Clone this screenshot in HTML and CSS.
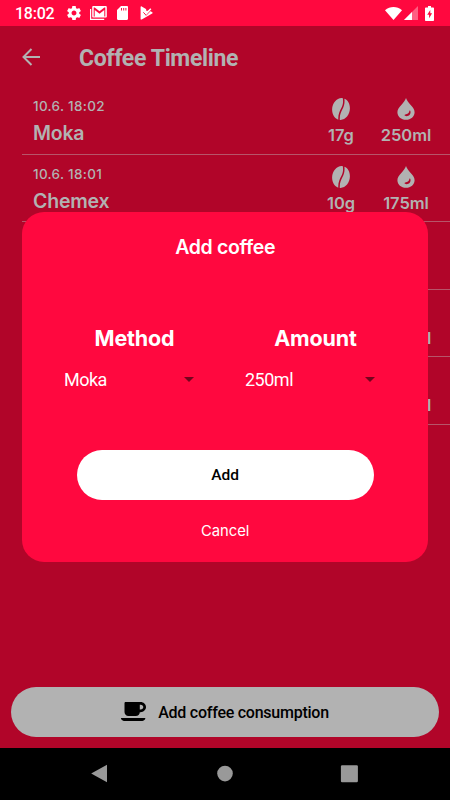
FILE: index.html
```html
<!DOCTYPE html>
<html lang="en">
<head>
<meta charset="utf-8">
<title>Coffee Timeline</title>
<link rel="stylesheet" href="styles.css">
</head>
<body>
<svg class="defs" aria-hidden="true">
  <symbol id="bean" viewBox="0 0 18 22">
    <path d="M10.800.2C5.200-.7.3 5 .1 11.300c-.1 5 2.400 9.300 6.200 10.400C6 16.800 7.400 13.600 9.200 10.200 10.800 7.200 11.500 4.200 10.800.2z"/>
    <path d="M12.400.7c.5 4.200-.3 7.400-1.900 10.400-1.700 3.300-3 6.300-2.700 10.800 5.500.5 10-5 10.100-11.300.1-4.800-2-8.700-5.500-9.900z"/>
  </symbol>
  <symbol id="drop" viewBox="0 0 18 22">
    <path fill-rule="evenodd" d="M9 0c.8 2.600 2.600 4.700 4.700 7 2.200 2.500 3.900 4.600 3.900 7.200 0 4.400-3.800 7.600-8.600 7.600S.4 18.600.4 14.200c0-2.600 1.700-4.700 3.900-7.200C6.400 4.700 8.200 2.600 9 0zM12.400 12.900c-.5 2.100-1.900 3.100-4.100 3.500-.9.200-1 1-.2 1.400 2.700 1.300 5.800-1.100 5.400-4.100-.1-.9-.9-1.500-1.100-.8z"/>
  </symbol>
</svg>
<div class="screen">
  <header class="status">
    <span class="clock">18:02</span>
    <svg class="s-gear" viewBox="2 2 20 20"><path d="M19.430 12.980c.04-.32.070-.64.070-.98s-.03-.66-.07-.98l2.110-1.650c.19-.15.24-.42.120-.64l-2-3.460c-.12-.22-.39-.3-.61-.22l-2.490 1c-.52-.4-1.080-.73-1.690-.98l-.38-2.650C14.460 2.180 14.250 2 14 2h-4c-.25 0-.46.180-.49.420l-.38 2.650c-.61.250-1.170.590-1.690.98l-2.490-1c-.23-.09-.49 0-.61.220l-2 3.460c-.13.220-.07.490.120.640l2.110 1.650c-.04.320-.07.650-.07.980s.03.660.07.980l-2.110 1.650c-.19.150-.24.420-.12.640l2 3.460c.12.220.39.300.61.220l2.490-1c.52.400 1.080.730 1.690.980l.38 2.650c.03.240.24.420.49.420h4c.25 0 .46-.18.490-.42l.38-2.650c.61-.25 1.170-.59 1.690-.98l2.490 1c.23.090.49 0 .61-.22l2-3.460c.12-.22.070-.49-.12-.64l-2.110-1.650zM12 15.500c-1.930 0-3.500-1.570-3.500-3.500s1.570-3.500 3.500-3.500 3.500 1.570 3.500 3.500-1.570 3.500-3.500 3.500z"/></svg>
    <svg class="s-mail" viewBox="0 0 17 14"><path d="M.6 3v10.400h13.600" fill="none" stroke="#fff" stroke-width="1.200"/><path fill-rule="evenodd" d="M3.400 0h12.200c.7 0 1.200.5 1.200 1.200v9.200c0 .7-.5 1.200-1.200 1.200H3.400c-.7 0-1.200-.5-1.200-1.200V1.200C2.200.5 2.700 0 3.400 0zM3.700 1.500v8.900h1V4L9.500 7.700 14.300 4v6.400h1V1.500h-1L9.500 5.300 4.700 1.500z"/></svg>
    <svg class="s-sd" viewBox="0 0 11 14"><path fill-rule="evenodd" d="M4 0h5.900C10.600 0 11 .5 11 1.200v11.600c0 .7-.4 1.200-1.100 1.200H1.100C.4 14 0 13.500 0 12.800V4zM4 2v2.500h1V2zm2.200 0v2.500h1V2zm2.200 0v2.500h1V2z"/></svg>
    <svg class="s-play" viewBox="0 0 13 14"><path d="M.6 1C.6.400 1.200.100 1.700.4L6 2.900l.5 2L9.600 4.500l2.600 1.700c.6.400.6 1 0 1.400L1.700 13.500c-.6.300-1.100 0-1.100-.6z"/><path d="M3.400 6.300 6.100 9.300l5.400-5.600" fill="none" stroke="#ff083f" stroke-width="1"/><path d="m4.300 5.300 2 2.300 4.500-4.900" fill="none" stroke="#fff" stroke-width="1.500"/></svg>
    <span class="grow"></span>
    <svg class="s-wifi" viewBox="0 0 17 13"><path d="M0 3.200C5-1 12-1 17 3.200L8.500 13z"/></svg>
    <svg class="s-cell" viewBox="0 0 14 14"><path opacity=".35" d="M14 0v14H0z"/><path d="M8 6v8H0z"/></svg>
    <svg class="s-batt" viewBox="0 0 9 15"><path fill-rule="evenodd" d="M3 0h3v1.500h2.200c.5 0 .8.300.8.800v11.900c0 .5-.3.800-.8.800H.8c-.5 0-.8-.3-.8-.8V2.300c0-.5.3-.8.8-.8H3zM5.300 4 2.200 8.800h1.900v3.500l3-5H5.300z"/></svg>
  </header>

  <main class="app">
    <div class="bar">
      <svg class="back" viewBox="0 0 18 18"><path d="M18 9H1.500M9.500 1 1.500 9l8 8"/></svg>
      <h1>Coffee Timeline</h1>
    </div>
    <ul class="list">
      <li class="row"><div class="what"><time>10.6. 18:02</time><b>Moka</b></div><div class="stat grams"><svg><use href="#bean"/></svg><span>17g</span></div><div class="stat water"><svg><use href="#drop"/></svg><span>250ml</span></div></li>
      <li class="row"><div class="what"><time>10.6. 18:01</time><b>Chemex</b></div><div class="stat grams"><svg><use href="#bean"/></svg><span>10g</span></div><div class="stat water"><svg><use href="#drop"/></svg><span>175ml</span></div></li>
      <li class="row"></li>
      <li class="row"><div class="what"></div><div class="stat water"><svg></svg><span>250ml</span></div></li>
      <li class="row"><div class="what"></div><div class="stat water"><svg></svg><span>250ml</span></div></li>
    </ul>
    <button class="consume">
      <svg viewBox="0 0 25 20"><path fill-rule="evenodd" d="M3.500 1.200C3.500.5 4 0 4.700 0h14.900C22.500 0 25 2.300 25 5.100s-2.400 5.100-5.400 5.100h-.8c-.1 2.300-1.700 3.700-4 3.700H7.500c-2.400 0-4-1.500-4-3.900zM18.800 2.700v4.800h.8c1.600 0 2.700-1 2.700-2.400s-1.100-2.400-2.700-2.400zM.6 16.100h23.100c.6 0 .8.500.5 1-.7 1.100-1.500 1.800-2.900 1.800H3c-1.300 0-2.200-.8-2.900-1.800-.3-.5-.1-1 .5-1z"/></svg>
      <span>Add coffee consumption</span>
    </button>
  </main>

  <nav class="nav">
    <svg viewBox="0 0 18 20"><path d="M15 .8v17.400L-.8 9.500z"/></svg>
    <svg viewBox="0 0 18 20"><circle cx="9" cy="9.600" r="7.800"/></svg>
    <svg viewBox="0 0 18 20"><rect x=".9" y="1.200" width="17" height="17" rx="1.200"/></svg>
  </nav>

  <section class="dialog">
    <h2>Add coffee</h2>
    <div class="fields">
      <div class="field method"><h3>Method</h3><div class="select"><span>Moka</span><i></i></div></div>
      <div class="field amount"><h3>Amount</h3><div class="select"><span>250ml</span><i></i></div></div>
    </div>
    <button class="add">Add</button>
    <button class="cancel">Cancel</button>
  </section>
</div>
</body>
</html>
```

FILE: styles.css
```css
* { box-sizing: border-box; margin: 0; padding: 0; }
body { font-family: Roboto, sans-serif; }
svg { display: block; flex: none; overflow: visible; }
button { border: 0; font-family: inherit; }
.defs { position: absolute; width: 0; height: 0; }

.screen {
  position: relative;
  width: 450px;
  height: 800px;
  display: flex;
  flex-direction: column;
  overflow: hidden;
}

.status {
  height: 26px;
  background: #ff083f;
  color: #fff;
  fill: #fff;
  display: flex;
  align-items: center;
  padding: 0 15px;
}
.clock { font-size: 16px; font-weight: 500; letter-spacing: -.25px; width: 52px; line-height: 26px; padding-top: 2px; }
.grow { flex: 1; }
.s-gear { width: 14px; height: 14px; }
.s-mail { width: 17px; height: 14px; margin-left: 9px; }
.s-sd { width: 11px; height: 14px; margin-left: 10px; }
.s-play { width: 13px; height: 14px; margin-left: 12px; }
.s-wifi { width: 17px; height: 13px; margin-right: 2px; }
.s-cell { width: 14px; height: 14px; margin-right: 7px; }
.s-batt { width: 9px; height: 15px; margin-right: 1px; }

.app {
  height: 722px;
  background: #b10529;
  color: #b2b2b2;
  fill: #b2b2b2;
  display: flex;
  flex-direction: column;
}
.bar { height: 61px; display: flex; align-items: center; padding: 1px 0 0 22px; }
.back { width: 18px; height: 18px; fill: none; stroke: #b2b2b2; stroke-width: 2; }
h1 { margin-left: 39px; font-size: 23px; font-weight: 700; letter-spacing: -.35px; line-height: 28px; padding-top: 3px; }

.list { list-style: none; margin-left: 22px; font-family: Inter, sans-serif; }
.row {
  height: 67.5px;
  border-bottom: 1.5px solid #b75569;
  display: flex;
  padding: 11px 0 0 11px;
}
.what { flex: 1; }
time { display: block; font-size: 13.500px; font-weight: 500; letter-spacing: .3px; line-height: 17px; }
.what b { display: block; font-size: 19.500px; font-weight: 600; letter-spacing: -.2px; line-height: 24px; margin-top: 6px; }
.stat { display: flex; flex-direction: column; align-items: center; }
.stat svg { width: 18px; height: 22px; }
.stat span { font-size: 16.500px; font-weight: 600; letter-spacing: -.05px; line-height: 20px; margin-top: 5px; white-space: nowrap; }
.grams { width: 64px; }
.water { width: 66px; margin-right: 11px; }

.consume {
  margin: auto 11px 11px;
  height: 50px;
  border-radius: 25px;
  background: #b2b2b2;
  color: #000;
  fill: #000;
  display: flex;
  align-items: center;
  justify-content: center;
  gap: 12px;
  font-size: 16px;
  font-weight: 500;
  letter-spacing: -.25px;
}
.consume svg { width: 25px; height: 20px; }

.nav {
  height: 52px;
  background: #000;
  fill: #999;
  display: flex;
  justify-content: center;
  gap: 106px;
  padding: 16px 1px 0 0;
}
.nav svg { width: 18px; height: 20px; }

.dialog {
  position: absolute;
  left: 22px;
  top: 211.500px;
  width: 406.300px;
  height: 350.500px;
  border-radius: 22px;
  background: #ff083f;
  color: #fff;
  font-family: Inter, sans-serif;
  display: flex;
  flex-direction: column;
  align-items: center;
}
h2 { font-size: 19.500px; font-weight: 600; letter-spacing: -.35px; line-height: 26px; margin-top: 22px; }
.fields { display: flex; align-self: stretch; margin-top: 64px; padding-left: 22px; }
.field { width: 181px; }
h3 { font-size: 21.500px; font-weight: 700; letter-spacing: -.15px; line-height: 28px; text-align: center; }
.select {
  display: flex;
  align-items: center;
  justify-content: space-between;
  margin-top: 16px;
  padding: 0 31px 0 20px;
  font: 400 18px/24px Roboto, sans-serif;
  letter-spacing: -.5px;
}
.select i { border: 5.500px solid transparent; border-top-color: #73041d; border-bottom: 0; }
.add {
  width: 297px;
  height: 50px;
  border-radius: 25px;
  background: #fff;
  color: #000;
  margin-top: 58.300px;
  font: 500 15.500px/50px Roboto, sans-serif;
}
.cancel { background: none; color: #fff; font-size: 14.800px; line-height: 20px; margin-top: 21.500px; }
```
